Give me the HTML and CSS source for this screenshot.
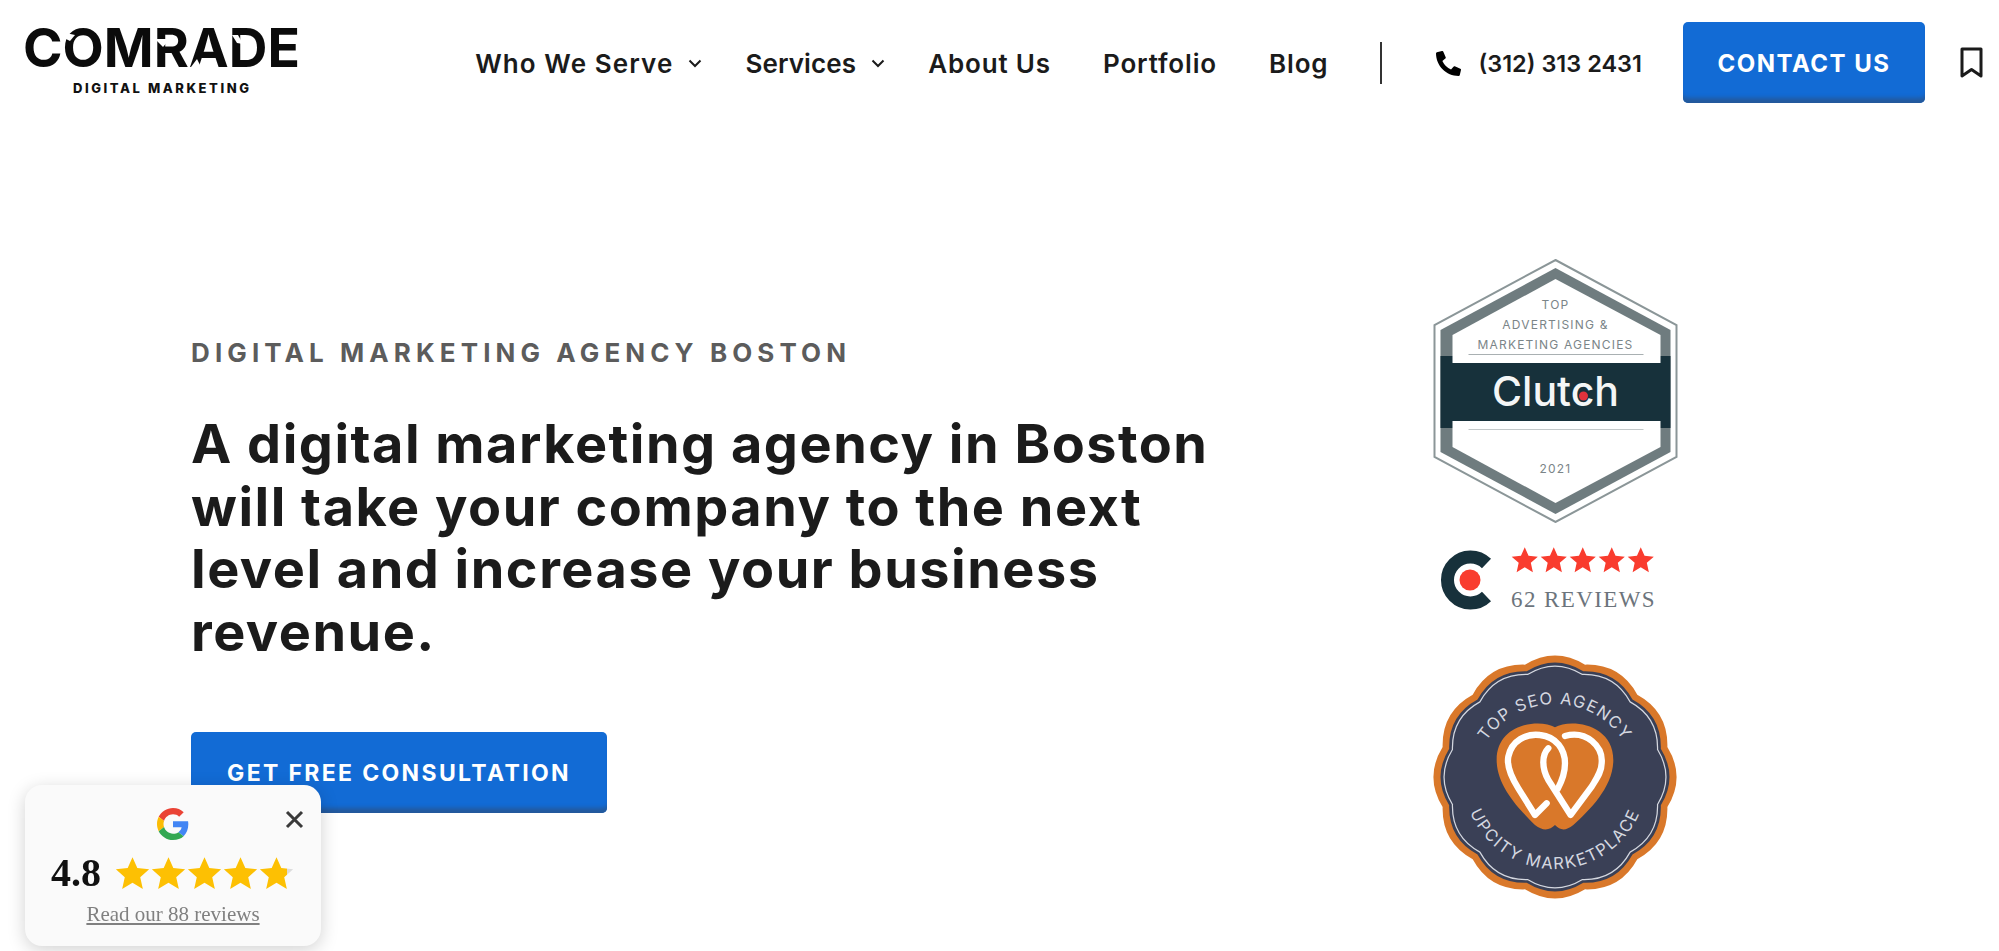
FILE: index.html
```html
<!DOCTYPE html>
<html lang="en">
<head>
    <meta charset="UTF-8">
    <meta name="viewport" content="width=device-width, initial-scale=1.0">
    <title>Digital Marketing Agency Boston</title>
    <link rel="stylesheet" href="styles.css">
</head>
<body>
    <svg class="defs" width="0" height="0">
        <defs>
            <symbol id="star" viewBox="0 0 24 24">
                <polygon points="12,.8 15.3,8.3 23.4,9.1 17.3,14.5 19.1,22.6 12,18.4 4.9,22.6 6.7,14.5 .6,9.1 8.7,8.3"/>
            </symbol>
            <linearGradient id="star-part">
                <stop offset="82%" stop-color="#fdc003"/>
                <stop offset="82%" stop-color="#dcdcdc"/>
            </linearGradient>
            <path id="scallop" d="M109.100 -29.200Q127 0 109.100 29.200Q110 63.500 79.900 79.900Q63.500 110 29.200 109.100Q0 127 -29.200 109.100Q-63.500 110 -79.900 79.900Q-110 63.500 -109.100 29.200Q-127 0 -109.100 -29.200Q-110 -63.500 -79.900 -79.900Q-63.500 -110 -29.200 -109.100Q0 -127 29.200 -109.100Q63.500 -110 79.900 -79.900Q110 -63.500 109.100 -29.200Z"/>
        </defs>
    </svg>

    <header>
        <a href="#" class="logo">
            <svg width="284" height="84" viewBox="-4 -12 284 84">
                <text class="logo-name" x="0" y="39" textLength="277" lengthAdjust="spacingAndGlyphs">COMRADE</text>
                <polygon fill="#fff" points="43,5 52,7 47,13 43,11"/>
                <polygon fill="#fff" points="132,11 147,11 140,19"/>
                <polygon fill="#fff" points="168,39 174,31 178,39"/>
                <polygon fill="#fff" points="209,7 215,7 220,16 214,15"/>
                <text class="logo-sub" x="138" y="65" text-anchor="middle" textLength="176">DIGITAL MARKETING</text>
            </svg>
        </a>
        <nav class="navbar">
            <a href="#" class="has-menu nav-serve">Who We Serve
                <svg class="chevron" viewBox="0 0 14 9"><path d="M1.500 1.500L7 7l5.500-5.500"/></svg>
            </a>
            <a href="#" class="has-menu nav-services">Services
                <svg class="chevron" viewBox="0 0 14 9"><path d="M1.500 1.500L7 7l5.500-5.500"/></svg>
            </a>
            <a href="#" class="wide">About Us</a>
            <a href="#" class="wide">Portfolio</a>
            <a href="#" class="wide">Blog</a>
        </nav>
        <span class="divider"></span>
        <a href="#" class="phone">
            <svg width="25" height="25" viewBox="0 0 512 512"><path d="M497.390 361.800l-112-48a24 24 0 0 0-28 6.900l-49.600 60.600A370.660 370.660 0 0 1 130.600 204.110l60.600-49.600a23.940 23.940 0 0 0 6.900-28l-48-112A24.160 24.160 0 0 0 122.600.61l-104 24A24 24 0 0 0 0 48c0 256.500 207.900 464 464 464a24 24 0 0 0 23.400-18.600l24-104a24.290 24.290 0 0 0-14.010-27.600z"/></svg>
            (312) 313 2431
        </a>
        <a href="#" class="btn btn-contact">CONTACT US</a>
        <a href="#" class="bookmark">
            <svg width="23" height="31" viewBox="0 0 23 31"><path d="M2 2h19v27l-9.500-6.500L2 29z"/></svg>
        </a>
    </header>

    <main class="hero">
        <section class="hero-copy">
            <p class="eyebrow">DIGITAL MARKETING AGENCY BOSTON</p>
            <h1>A digital marketing agency in Boston will take your company to the next level and increase your business revenue.</h1>
            <a href="#" class="btn btn-hero">GET FREE CONSULTATION</a>
        </section>

        <aside class="badges">
            <svg class="badge-clutch" width="245" height="264" viewBox="0 0 244 264">
                <polygon points="122,1 243,66 243,198 122,263 1,198 1,66" fill="#fff" stroke="#8b9698" stroke-width="2"/>
                <polygon points="122,9 237,71 237,193 122,255 7,193 7,71" fill="#6f7c7f"/>
                <polygon points="122,20 227,76 227,188 122,244 19,188 19,76" fill="#fff"/>
                <rect x="7" y="97" width="230" height="72" fill="#17313b"/>
                <rect x="19" y="97" width="208" height="7" fill="#fff"/>
                <rect x="19" y="162" width="208" height="7" fill="#fff"/>
                <rect x="35" y="95" width="175" height="1" fill="#a9b0b2"/>
                <rect x="35" y="170" width="175" height="1" fill="#c3c8c9"/>
                <text class="clutch-small" x="122" y="50" text-anchor="middle">TOP</text>
                <text class="clutch-small" x="122" y="70" text-anchor="middle">ADVERTISING &amp;</text>
                <text class="clutch-small" x="122" y="90" text-anchor="middle">MARKETING AGENCIES</text>
                <text class="clutch-name" x="122" y="147" text-anchor="middle">Clutch</text>
                <circle cx="150" cy="137" r="4.500" fill="#e0323c"/>
                <text class="clutch-small" x="122" y="214" text-anchor="middle">2021</text>
            </svg>

            <div class="clutch-reviews">
                <svg width="60" height="60" viewBox="0 0 60 60">
                    <path d="M46.500 13.500A23 23 0 1 0 46.500 46.500" fill="none" stroke="#17313b" stroke-width="13"/>
                    <circle cx="30" cy="30" r="10.500" fill="#f93c2e"/>
                </svg>
                <div class="clutch-meta">
                    <div class="stars stars-red">
                        <svg><use href="#star"/></svg>
                        <svg><use href="#star"/></svg>
                        <svg><use href="#star"/></svg>
                        <svg><use href="#star"/></svg>
                        <svg><use href="#star"/></svg>
                    </div>
                    <span class="clutch-count">62 REVIEWS</span>
                </div>
            </div>

            <svg class="badge-upcity" width="244" height="244" viewBox="0 0 244 244">
                <defs>
                    <path id="arc-top" d="M40 131A82 82 0 0 1 204 131"/>
                    <path id="arc-bottom" d="M30 122A92 92 0 0 0 214 122"/>
                </defs>
                <use href="#scallop" transform="translate(122 122) scale(1.030)" fill="#d9782a"/>
                <use href="#scallop" transform="translate(122 122) scale(.970)" fill="#3a4056"/>
                <use href="#scallop" transform="translate(122 122) scale(.940)" fill="none" stroke="#d5d8e0" stroke-width="1.300"/>
                <text class="upcity-text"><textPath href="#arc-top" startOffset="50%" text-anchor="middle">TOP SEO AGENCY</textPath></text>
                <text class="upcity-text upcity-bottom"><textPath href="#arc-bottom" startOffset="50%" text-anchor="middle">UPCITY MARKETPLACE</textPath></text>
                <g transform="translate(-33 -15) scale(.3333)">
                    <path fill="#d9782a" d="M465 262C510 235 640 250 640 360C640 440 570 510 520 555C495 575 480 570 465 555C450 570 430 575 405 555C360 510 290 440 290 360C290 250 420 235 465 262Z"/>
                    <path fill="none" stroke="#fff" stroke-width="19" stroke-linecap="round" stroke-linejoin="round" d="M440 490L405 525L355 445C330 405 320 375 325 350C335 300 380 280 420 285C470 290 495 330 495 370C495 400 485 425 473 447"/>
                    <path fill="none" stroke="#fff" stroke-width="19" stroke-linecap="round" stroke-linejoin="round" d="M495 288C560 270 610 320 605 370C605 395 590 415 575 440L512 525L445 420C425 385 425 345 445 325"/>
                </g>
            </svg>
        </aside>
    </main>

    <div class="review-card">
        <button class="review-close">
            <svg width="19" height="19" viewBox="0 0 19 19"><path d="M2 2l15 15M17 2L2 17"/></svg>
        </button>
        <svg class="google-g" width="32" height="32" viewBox="0 0 48 48">
            <path fill="#EA4335" d="M24 9.500c3.540 0 6.710 1.220 9.210 3.600l6.850-6.850C35.900 2.380 30.470 0 24 0 14.620 0 6.510 5.380 2.560 13.220l7.980 6.190C12.430 13.720 17.740 9.500 24 9.500z"/>
            <path fill="#4285F4" d="M46.980 24.550c0-1.570-.15-3.090-.38-4.550H24v9.020h12.940c-.58 2.960-2.260 5.480-4.780 7.180l7.730 6c4.510-4.180 7.090-10.360 7.090-17.650z"/>
            <path fill="#FBBC05" d="M10.530 28.590c-.48-1.450-.76-2.990-.76-4.590s.27-3.140.76-4.590l-7.980-6.190C.92 16.460 0 20.120 0 24c0 3.880.92 7.54 2.560 10.780l7.970-6.190z"/>
            <path fill="#34A853" d="M24 48c6.480 0 11.930-2.130 15.890-5.810l-7.730-6c-2.150 1.450-4.920 2.300-8.160 2.300-6.260 0-11.570-4.220-13.470-9.910l-7.980 6.190C6.510 42.620 14.620 48 24 48z"/>
        </svg>
        <div class="review-score">
            <strong>4.8</strong>
            <div class="stars stars-gold">
                <svg><use href="#star"/></svg>
                <svg><use href="#star"/></svg>
                <svg><use href="#star"/></svg>
                <svg><use href="#star"/></svg>
                <svg class="star-part"><use href="#star"/></svg>
            </div>
        </div>
        <a href="#" class="review-link">Read our 88 reviews</a>
    </div>
</body>
</html>
```

FILE: styles.css
```css
* {
    box-sizing: border-box;
}

html, body {
    height: 100%;
}

body {
    margin: 0;
    background: #fff;
    color: #1b1b1b;
    font-family: Inter, "Liberation Sans", sans-serif;
    overflow: hidden;
}

a {
    color: inherit;
    text-decoration: none;
}

.defs {
    position: absolute;
}

header {
    display: flex;
    align-items: center;
    height: 125px;
    padding: 0 16px 0 19px;
}

.logo {
    display: block;
    margin-top: -9px;
}

.logo svg {
    display: block;
}

.logo-name {
    font-size: 54px;
    font-weight: 700;
    fill: #0b0b0b;
}

.logo-sub {
    font-size: 13px;
    font-weight: 800;
    fill: #111;
}

.navbar {
    display: flex;
    align-items: center;
    margin-left: auto;
    padding-top: 2px;
    font-size: 26px;
    font-weight: 600;
    letter-spacing: .85px;
}

.navbar a {
    display: flex;
    align-items: center;
    white-space: nowrap;
}

.has-menu {
    margin-right: 43px;
}

.navbar .nav-serve {
    letter-spacing: 1.100px;
}

.navbar .nav-services {
    letter-spacing: .1px;
}

.wide {
    margin-right: 52px;
}

.chevron {
    width: 14px;
    height: 9px;
    margin-left: 15px;
    fill: none;
    stroke: #1b1b1b;
    stroke-width: 2;
}

.divider {
    width: 2px;
    height: 42px;
    background: #333;
}

.phone {
    display: flex;
    align-items: center;
    gap: 17px;
    margin: 2px 41px 0 54px;
    font-size: 23.500px;
    font-weight: 600;
    white-space: nowrap;
}

.btn {
    display: flex;
    align-items: center;
    justify-content: center;
    background: #126bd5;
    border-radius: 5px;
    color: #fff;
    font-weight: 700;
    box-shadow: inset 0 -8px 4px -3px #24599b;
}

.btn-contact {
    width: 242px;
    height: 81px;
    padding-top: 2px;
    font-size: 24px;
    letter-spacing: 1.500px;
}

.bookmark {
    display: block;
    margin-left: 35px;
    line-height: 0;
}

.bookmark path {
    fill: none;
    stroke: #1b1b1b;
    stroke-width: 3;
    stroke-linejoin: round;
}

.hero {
    display: flex;
    padding: 134px 0 0 191px;
}

.hero-copy {
    width: 1242px;
    padding-top: 78px;
}

.eyebrow {
    margin: 0 0 44px;
    color: #5c5c5c;
    font-size: 26px;
    font-weight: 700;
    letter-spacing: 5.100px;
    line-height: 32px;
}

h1 {
    width: 1040px;
    margin: 0 0 69px;
    font-size: 54px;
    font-weight: 700;
    letter-spacing: 1.500px;
    line-height: 62.500px;
}

.btn-hero {
    width: 416px;
    height: 81px;
    font-size: 23px;
    letter-spacing: 2.350px;
}

.badges {
    display: flex;
    flex-direction: column;
    width: 245px;
}

.badge-clutch, .badge-upcity {
    display: block;
}

.clutch-small {
    font-size: 12px;
    letter-spacing: 1.200px;
    fill: #7b8588;
}

.clutch-name {
    font-size: 41px;
    font-weight: 500;
    fill: #f4f6f6;
}

.clutch-reviews {
    display: flex;
    align-items: center;
    gap: 11px;
    margin: 23px 0 41px 7px;
}

.clutch-meta {
    display: flex;
    flex-direction: column;
}

.stars {
    display: flex;
}

.stars svg {
    display: block;
}

.stars-red {
    gap: 1.500px;
    margin-bottom: 12px;
    fill: #f93c2e;
}

.stars-red svg {
    width: 27.500px;
    height: 28px;
}

.clutch-count {
    color: #6c747c;
    font-family: "Liberation Serif", serif;
    font-size: 23px;
    letter-spacing: 1.400px;
    line-height: 28px;
    white-space: nowrap;
}

.upcity-text {
    font-size: 16.500px;
    letter-spacing: 1.300px;
    fill: #d5d8e0;
}

.upcity-bottom {
    letter-spacing: 1.600px;
}

.review-card {
    position: fixed;
    left: 25px;
    top: 785px;
    display: flex;
    flex-direction: column;
    align-items: center;
    width: 296px;
    height: 161px;
    padding-top: 23px;
    background: #fafafa;
    border-radius: 17px;
    box-shadow: 0 4px 18px rgba(0, 0, 0, 0.18);
}

.review-close {
    position: absolute;
    top: 25px;
    right: 17px;
    padding: 0;
    background: none;
    border: 0;
    line-height: 0;
}

.review-close path {
    fill: none;
    stroke: #3a3a3a;
    stroke-width: 3;
}

.review-score {
    display: flex;
    align-items: center;
    gap: 14px;
    align-self: flex-start;
    margin: 13px 0 9px 26px;
}

.review-score strong {
    font-family: "Liberation Serif", serif;
    font-size: 40px;
    font-weight: 700;
    line-height: 40px;
    color: #111;
}

.stars-gold {
    gap: 1px;
    fill: #fdc003;
}

.stars-gold svg {
    width: 35px;
    height: 35px;
}

.stars-gold .star-part {
    fill: url(#star-part);
}

.review-link {
    color: #808080;
    font-family: "Liberation Serif", serif;
    font-size: 21px;
    text-decoration: underline;
}
```
